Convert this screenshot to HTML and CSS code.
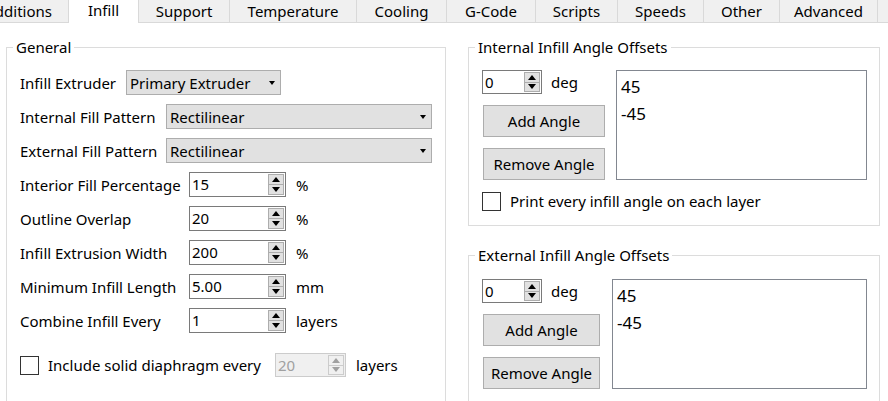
FILE: index.html
```html
<!DOCTYPE html>
<html>
<head>
<meta charset="utf-8">
<link rel="stylesheet" href="styles.css">
</head>
<body>
<div class="tabs">
  <div class="tab tab-cut"><span>Additions</span></div>
  <div class="tab tab-active tab-infill">Infill</div>
  <div class="tab tab-support">Support</div>
  <div class="tab tab-temp">Temperature</div>
  <div class="tab tab-cooling">Cooling</div>
  <div class="tab tab-gcode">G-Code</div>
  <div class="tab tab-scripts">Scripts</div>
  <div class="tab tab-speeds">Speeds</div>
  <div class="tab tab-other">Other</div>
  <div class="tab tab-adv">Advanced</div>
  <div class="tab tab-fill"></div>
</div>

<div class="page">
  <div class="group group-general">
    <div class="group-title">General</div>
    <div class="general-body">
      <div class="form-grid grid-extruder">
        <div class="label">Infill Extruder</div>
        <div class="combo combo-extruder"><span class="combo-text">Primary Extruder</span><span class="combo-arrow"></span></div>
      </div>
      <div class="form-grid grid-pattern">
        <div class="label">Internal Fill Pattern</div>
        <div class="combo combo-wide"><span class="combo-text">Rectilinear</span><span class="combo-arrow"></span></div>
        <div class="label">External Fill Pattern</div>
        <div class="combo combo-wide"><span class="combo-text">Rectilinear</span><span class="combo-arrow"></span></div>
      </div>
      <div class="form-grid grid-numbers">
        <div class="label">Interior Fill Percentage</div>
        <div class="field"><div class="spin spin-std"><span class="spin-text">15</span><span class="spin-btns"><span class="spin-btn"><span class="tri-up"></span></span><span class="spin-btn"><span class="tri-down"></span></span></span></div><span class="unit">%</span></div>
        <div class="label">Outline Overlap</div>
        <div class="field"><div class="spin spin-std"><span class="spin-text">20</span><span class="spin-btns"><span class="spin-btn"><span class="tri-up"></span></span><span class="spin-btn"><span class="tri-down"></span></span></span></div><span class="unit">%</span></div>
        <div class="label">Infill Extrusion Width</div>
        <div class="field"><div class="spin spin-std"><span class="spin-text">200</span><span class="spin-btns"><span class="spin-btn"><span class="tri-up"></span></span><span class="spin-btn"><span class="tri-down"></span></span></span></div><span class="unit">%</span></div>
        <div class="label">Minimum Infill Length</div>
        <div class="field"><div class="spin spin-std"><span class="spin-text">5.00</span><span class="spin-btns"><span class="spin-btn"><span class="tri-up"></span></span><span class="spin-btn"><span class="tri-down"></span></span></span></div><span class="unit">mm</span></div>
        <div class="label">Combine Infill Every</div>
        <div class="field"><div class="spin spin-std"><span class="spin-text">1</span><span class="spin-btns"><span class="spin-btn"><span class="tri-up"></span></span><span class="spin-btn"><span class="tri-down"></span></span></span></div><span class="unit">layers</span></div>
      </div>
      <div class="check-row diaphragm-row">
        <span class="checkbox"></span>
        <span class="check-label">Include solid diaphragm every</span>
        <div class="spin spin-disabled"><span class="spin-text">20</span><span class="spin-btns"><span class="spin-btn"><span class="tri-up"></span></span><span class="spin-btn"><span class="tri-down"></span></span></span></div>
        <span class="unit">layers</span>
      </div>
    </div>
  </div>

  <div class="right-col">
    <div class="group group-angles group-internal">
      <div class="group-title">Internal Infill Angle Offsets</div>
      <div class="angles-body">
        <div class="angles-controls">
          <div class="deg-row"><div class="spin spin-deg"><span class="spin-text">0</span><span class="spin-btns"><span class="spin-btn"><span class="tri-up"></span></span><span class="spin-btn"><span class="tri-down"></span></span></span></div><span class="unit unit-deg">deg</span></div>
          <div class="btn btn-add">Add Angle</div>
          <div class="btn btn-remove">Remove Angle</div>
        </div>
        <div class="listbox listbox-internal">
          <div class="list-item">45</div>
          <div class="list-item">-45</div>
        </div>
      </div>
      <div class="check-row every-row">
        <span class="checkbox"></span>
        <span class="check-label">Print every infill angle on each layer</span>
      </div>
    </div>

    <div class="group group-angles group-external">
      <div class="group-title">External Infill Angle Offsets</div>
      <div class="angles-body angles-body-ext">
        <div class="angles-controls angles-controls-ext">
          <div class="deg-row"><div class="spin spin-deg"><span class="spin-text">0</span><span class="spin-btns"><span class="spin-btn"><span class="tri-up"></span></span><span class="spin-btn"><span class="tri-down"></span></span></span></div><span class="unit unit-deg">deg</span></div>
          <div class="btn btn-add">Add Angle</div>
          <div class="btn btn-remove">Remove Angle</div>
        </div>
        <div class="listbox listbox-external">
          <div class="list-item">45</div>
          <div class="list-item">-45</div>
        </div>
      </div>
    </div>
  </div>
</div>
</body>
</html>
```
FILE: styles.css
```css
* { box-sizing: border-box; }
html, body { margin: 0; padding: 0; }
body {
  width: 888px;
  height: 401px;
  overflow: hidden;
  background: #ffffff;
  color: #000000;
  font-family: "Noto Sans", "Open Sans", sans-serif;
  font-size: 15px;
  line-height: 20px;
}

/* ---------- tabs ---------- */
.tabs {
  display: flex;
  height: 23px;
  background: #f0f0f0;
}
.tab {
  flex: none;
  height: 23px;
  line-height: 22px;
  text-align: center;
  white-space: nowrap;
  border-right: 1px solid #d9d9d9;
  border-bottom: 1px solid #d9d9d9;
  background: #f0f0f0;
}
.tab-cut {
  width: 69px;
  display: flex;
  justify-content: flex-end;
  overflow: hidden;
  padding-right: 16px;
}
.tab-active {
  background: #ffffff;
  border-bottom: none;
  line-height: 20px;
}
.tab-infill { width: 70px; }
.tab-support { width: 91px; }
.tab-temp { width: 127px; }
.tab-cooling { width: 90px; }
.tab-gcode { width: 89px; }
.tab-scripts { width: 82px; }
.tab-speeds { width: 86px; }
.tab-other { width: 76px; }
.tab-adv { width: 98px; }
.tab-fill { flex: 1; border-right: none; }

/* ---------- page ---------- */
.page {
  display: flex;
  align-items: flex-start;
  padding: 24px 0 0 6px;
}
.group {
  border: 1px solid #dcdcdc;
}
.group-title {
  width: fit-content;
  margin: -11px 0 0 6px;
  padding: 0 3px;
  line-height: 20px;
  background: #ffffff;
}
.group-general {
  width: 440px;
  height: 420px;
}
.general-body {
  display: flex;
  flex-direction: column;
  gap: 9px;
  padding: 13px 0 0 13px;
}
.form-grid {
  display: grid;
  grid-auto-rows: 25px;
  row-gap: 9px;
  align-items: center;
}
.grid-extruder { grid-template-columns: 106px auto; justify-content: start; }
.grid-pattern { grid-template-columns: 146px 266px; }
.grid-numbers { grid-template-columns: 169px auto; justify-content: start; }
.label { white-space: nowrap; }

/* combo box */
.combo {
  display: flex;
  align-items: center;
  height: 25px;
  padding: 0 5px 0 3px;
  background: #e1e1e1;
  border: 1px solid #adadad;
}
.combo-extruder { width: 155px; }
.combo-wide { width: 266px; }
.combo-text { flex: 1; white-space: nowrap; }
.combo-arrow {
  width: 0;
  height: 0;
  border-left: 3.5px solid transparent;
  border-right: 3.5px solid transparent;
  border-top: 4px solid #000000;
}

/* spin box */
.field { display: flex; align-items: center; }
.spin {
  display: flex;
  height: 25px;
  background: #ffffff;
  border: 1px solid #7a7a7a;
}
.spin-std { width: 97px; }
.spin-deg { width: 60px; height: 24px; }
.spin-disabled {
  width: 71px;
  height: 24px;
  background: #f0f0f0;
  border-color: #cccccc;
  color: #a0a0a0;
}
.spin-text {
  flex: 1;
  padding-left: 2px;
  line-height: 23px;
  white-space: nowrap;
}
.spin-deg .spin-text, .spin-disabled .spin-text { line-height: 22px; }
.spin-btns {
  display: flex;
  flex-direction: column;
  width: 16px;
  margin: 1px 1px 1px 0;
}
.spin-btn {
  flex: 1;
  display: flex;
  align-items: center;
  justify-content: center;
  background: #e1e1e1;
  border: 1px solid #adadad;
}
.spin-btn + .spin-btn { border-top: none; }
.spin-disabled .spin-btn { background: #f0f0f0; border-color: #cccccc; }
.tri-up, .tri-down {
  width: 0;
  height: 0;
  border-left: 4px solid transparent;
  border-right: 4px solid transparent;
}
.tri-up { border-bottom: 5px solid #000000; }
.tri-down { border-top: 5px solid #000000; }
.spin-disabled .tri-up { border-bottom-color: #a0a0a0; }
.spin-disabled .tri-down { border-top-color: #a0a0a0; }
.unit { margin-left: 10px; white-space: nowrap; }
.unit-deg { margin-left: 9px; }

/* checkbox rows */
.check-row {
  display: flex;
  align-items: center;
}
.checkbox {
  flex: none;
  width: 19px;
  height: 19px;
  border: 1px solid #333333;
  background: #ffffff;
}
.check-label { margin-left: 9px; white-space: nowrap; }
.diaphragm-row { margin-top: 11px; height: 24px; }
.diaphragm-row .spin { margin-left: 14px; }

/* right column */
.right-col {
  display: flex;
  flex-direction: column;
  width: 412px;
  margin-left: 22px;
}
.group-internal { height: 179px; }
.group-external { margin-top: 29px; height: 200px; }
.angles-body {
  display: flex;
  align-items: flex-start;
  padding: 13px 12px 0 13px;
}
.angles-body-ext { padding-top: 14px; }
.angles-controls {
  display: flex;
  flex-direction: column;
  width: 124px;
}
.deg-row { display: flex; align-items: center; height: 24px; }
.btn {
  width: 122px;
  height: 32px;
  margin-left: 1px;
  line-height: 30px;
  text-align: center;
  white-space: nowrap;
  background: #e1e1e1;
  border: 1px solid #adadad;
}
.btn-add { margin-top: 11px; }
.btn-remove { margin-top: 11px; }
.angles-controls-ext .btn { width: 117px; }
.listbox {
  margin-left: auto;
  height: 110px;
  padding: 2px 0 0 4px;
  background: #ffffff;
  border: 1px solid #828790;
  font-size: 17px;
}
.listbox-internal { width: 251px; }
.listbox-external { width: 255px; }
.list-item { line-height: 27px; }
.every-row { margin: 11px 0 0 13px; }
```
